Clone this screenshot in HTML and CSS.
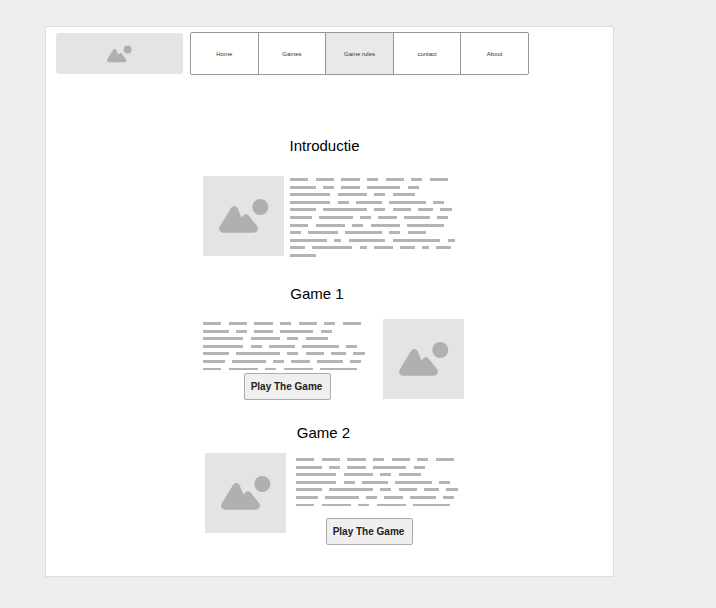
FILE: index.html
```html
<!DOCTYPE html>
<html lang="nl">
<head>
  <meta charset="UTF-8" />
  <meta name="viewport" content="width=device-width, initial-scale=1.0"/>
  <title>Games wireframe</title>
  <link rel="stylesheet" href="styles.css">
</head>
<body>
  <svg class="defs" width="0" height="0">
    <symbol id="picture" viewBox="0 0 81 80">
      <circle cx="57.3" cy="31" r="8"/>
      <path d="M20.5 56.7H50.5C54.5 56.7 56 53 54 50L46 40C44.5 37.5 41.5 37.5 40 40L38.5 41.5L34.5 32C33 29.3 29.5 29.3 28 32L17 50C15 53 16.5 56.7 20.5 56.7Z"/>
    </symbol>
  </svg>

  <div class="frame">
    <header class="top">
      <div class="logo"><svg class="logo-icon"><use href="#picture"/></svg></div>
      <nav class="menu">
        <a class="menu-item">Home</a>
        <a class="menu-item">Games</a>
        <a class="menu-item active">Game rules</a>
        <a class="menu-item">contact</a>
        <a class="menu-item">About</a>
      </nav>
    </header>

    <h2 class="title intro-title">Introductie</h2>
    <section class="row intro-row">
      <div class="pic"><svg class="pic-icon"><use href="#picture"/></svg></div>
      <div class="copy intro-copy">
        <div class="line"><i class="b18"></i><i class="b18"></i><i class="b18"></i><i class="b11"></i><i class="b18"></i><i class="b11"></i><i class="b18"></i></div>
        <div class="line"><i class="b26"></i><i class="b11"></i><i class="b18"></i><i class="b33"></i><i class="b11"></i></div>
        <div class="line"><i class="b40"></i><i class="b29"></i><i class="b11"></i><i class="b22"></i></div>
        <div class="line"><i class="b40"></i><i class="b11"></i><i class="b26"></i><i class="b37"></i><i class="b11"></i></div>
        <div class="line"><i class="b26"></i><i class="b44"></i><i class="b11"></i><i class="b18"></i><i class="b15"></i><i class="b11"></i></div>
        <div class="line"><i class="b22"></i><i class="b33"></i><i class="b11"></i><i class="b18"></i><i class="b26"></i><i class="b11"></i></div>
        <div class="line"><i class="b18"></i><i class="b29"></i><i class="b11"></i><i class="b29"></i><i class="b37"></i></div>
        <div class="line"><i class="b11"></i><i class="b29"></i><i class="b37"></i><i class="b11"></i><i class="b18"></i></div>
        <div class="line"><i class="b37"></i><i class="b7"></i><i class="b37"></i><i class="b48"></i><i class="b7"></i></div>
        <div class="line"><i class="b15"></i><i class="b40"></i><i class="b7"></i><i class="b18"></i><i class="b15"></i><i class="b7"></i><i class="b15"></i></div>
        <div class="line"><i class="b26"></i></div>
      </div>
    </section>

    <h2 class="title game-one-title">Game 1</h2>
    <section class="row game-one-row">
      <div class="copy game-one-copy">
        <div class="line"><i class="b18"></i><i class="b18"></i><i class="b18"></i><i class="b11"></i><i class="b18"></i><i class="b11"></i><i class="b18"></i></div>
        <div class="line"><i class="b26"></i><i class="b11"></i><i class="b18"></i><i class="b33"></i><i class="b11"></i></div>
        <div class="line"><i class="b40"></i><i class="b29"></i><i class="b11"></i><i class="b22"></i></div>
        <div class="line"><i class="b40"></i><i class="b11"></i><i class="b26"></i><i class="b37"></i><i class="b11"></i></div>
        <div class="line"><i class="b26"></i><i class="b44"></i><i class="b11"></i><i class="b18"></i><i class="b15"></i><i class="b11"></i></div>
        <div class="line"><i class="b22"></i><i class="b33"></i><i class="b11"></i><i class="b18"></i><i class="b26"></i><i class="b11"></i></div>
        <div class="line thin"><i class="b18"></i><i class="b29"></i><i class="b11"></i><i class="b29"></i><i class="b37"></i></div>
        <button class="play play-one">Play The Game</button>
      </div>
      <div class="pic"><svg class="pic-icon"><use href="#picture"/></svg></div>
    </section>

    <h2 class="title game-two-title">Game 2</h2>
    <section class="row game-two-row">
      <div class="pic"><svg class="pic-icon"><use href="#picture"/></svg></div>
      <div class="copy game-two-copy">
        <div class="line"><i class="b18"></i><i class="b18"></i><i class="b18"></i><i class="b11"></i><i class="b18"></i><i class="b11"></i><i class="b18"></i></div>
        <div class="line"><i class="b26"></i><i class="b11"></i><i class="b18"></i><i class="b33"></i><i class="b11"></i></div>
        <div class="line"><i class="b40"></i><i class="b29"></i><i class="b11"></i><i class="b22"></i></div>
        <div class="line"><i class="b40"></i><i class="b11"></i><i class="b26"></i><i class="b37"></i><i class="b11"></i></div>
        <div class="line"><i class="b26"></i><i class="b44"></i><i class="b11"></i><i class="b18"></i><i class="b15"></i><i class="b11"></i></div>
        <div class="line"><i class="b22"></i><i class="b33"></i><i class="b11"></i><i class="b18"></i><i class="b26"></i><i class="b11"></i></div>
        <div class="line thin"><i class="b18"></i><i class="b29"></i><i class="b11"></i><i class="b29"></i><i class="b37"></i></div>
        <button class="play play-two">Play The Game</button>
      </div>
    </section>
  </div>
</body>
</html>
```

FILE: styles.css
```css
* { box-sizing: border-box; }
body {
  font-family: "Liberation Sans", Arial, sans-serif;
  background-color: #ededed;
  margin: 0;
  padding: 26px 0 0 45px;
  height: 608px;
  overflow: hidden;
}
.defs { display: block; height: 0; }
.frame {
  width: 569px; height: 551px;
  background-color: #fff;
  border: 1px solid #dcdcdc;
}

.top {
  display: flex; align-items: center; gap: 7px;
  padding: 5px 0 0 10px;
}
.logo {
  width: 127px; height: 41px;
  display: flex; align-items: center; justify-content: center;
  background-color: #e4e4e4;
  border-radius: 3px;
}
.logo-icon { width: 40.5px; height: 40px; fill: #b0b0b0; }
.menu { display: flex; }
.menu-item {
  flex: none;
  width: 68.6px; height: 43px;
  display: flex; align-items: center; justify-content: center;
  margin-left: -1px;
  border: 1px solid #969696;
  font-size: 6px; color: #333;
}
.menu-item:first-child { margin-left: 0; border-radius: 2px 0 0 2px; }
.menu-item:last-child { border-radius: 0 2px 2px 0; }
.menu-item.active { background-color: #e9e9e9; }

.title {
  margin: 0;
  font-size: 15px; font-weight: normal; line-height: 18px;
  text-align: center; color: #000;
}
.intro-title { width: 557px; margin-top: 62px; }
.game-one-title { width: 542px; margin-top: 29px; }
.game-two-title { width: 555px; margin-top: 24px; }

.row { display: flex; align-items: flex-start; }
.intro-row { height: 80px; margin: 21px 0 0 157px; gap: 6px; }
.game-one-row { margin: 16px 0 0 157px; gap: 12px; }
.game-two-row { margin: 11px 0 0 159px; gap: 10px; }

.pic {
  flex: none;
  width: 81px; height: 80px;
  background-color: #e4e4e4;
}
.pic-icon { display: block; width: 81px; height: 80px; fill: #b0b0b0; }

.copy { display: flex; flex-direction: column; }
.intro-copy { padding-top: 2px; }
.game-one-copy { width: 168px; padding-top: 3px; }
.game-two-copy { width: 168px; padding-top: 5px; }

.line { display: flex; gap: 7.3px; height: 3px; }
.line + .line { margin-top: 4.6px; }
.line i { display: block; height: 3px; background-color: #b4b4b4; }
.line.thin i { height: 2px; }
.b7 { width: 7.3px; }
.b11 { width: 11.2px; }
.b15 { width: 14.7px; }
.b18 { width: 18.4px; }
.b22 { width: 22px; }
.b26 { width: 25.7px; }
.b29 { width: 29.3px; }
.b33 { width: 33.3px; }
.b37 { width: 36.7px; }
.b40 { width: 40.3px; }
.b44 { width: 44px; }
.b48 { width: 47.7px; }

.play {
  width: 87px; height: 27px;
  padding: 0 2px 0 0;
  background-color: #efefef;
  border: 1px solid #ababab;
  border-radius: 2px;
  font-family: inherit; font-size: 10px; font-weight: bold;
  color: #222;
}
.play-one { margin: 2.4px 0 0 41px; }
.play-two { margin: 11.4px 0 0 30px; }
```
